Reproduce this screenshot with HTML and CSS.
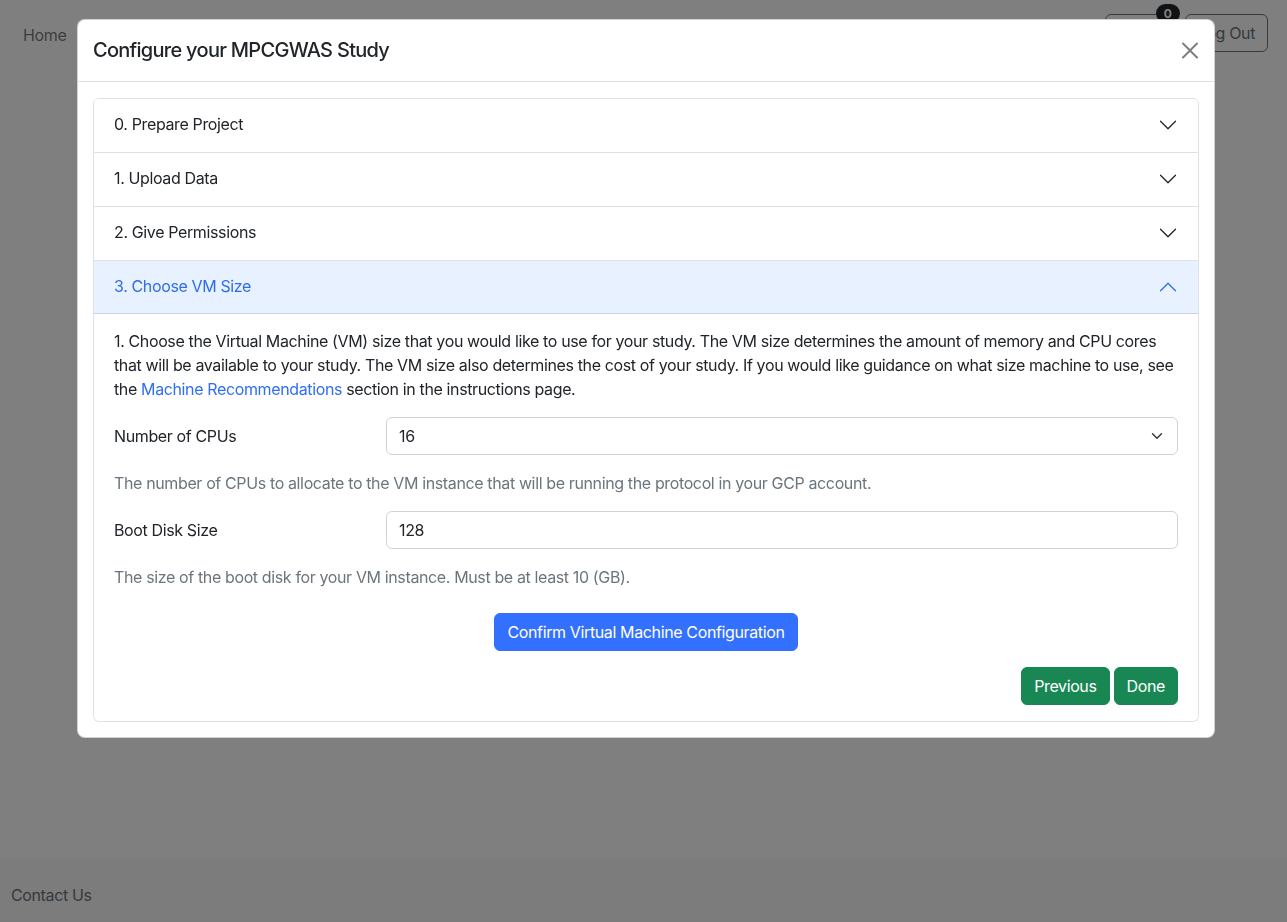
FILE: index.html
```html
<!DOCTYPE html>
<html lang="en">
<head>
<meta charset="utf-8">
<title>Configure your MPCGWAS Study</title>
<link rel="stylesheet" href="styles.css">
</head>
<body>
<div class="page">
  <nav class="navbar">
    <a class="nav-link" href="#">Home</a>
    <div class="nav-actions">
      <button class="btn btn-outline btn-notify">Inbox<span class="badge">0</span></button>
      <button class="btn btn-outline">Log Out</button>
    </div>
  </nav>
  <main class="main"></main>
  <footer class="footer">
    <a class="footer-link" href="#">Contact Us</a>
  </footer>
</div>

<div class="backdrop"></div>

<div class="modal">
  <div class="modal-dialog">
    <div class="modal-content">
      <div class="modal-header">
        <h5 class="modal-title">Configure your MPCGWAS Study</h5>
        <button class="btn-close" aria-label="Close">
          <svg viewBox="0 0 16 16" width="16" height="16"><path d="M.293.293a1 1 0 0 1 1.414 0L8 6.586 14.293.293a1 1 0 1 1 1.414 1.414L9.414 8l6.293 6.293a1 1 0 0 1-1.414 1.414L8 9.414l-6.293 6.293a1 1 0 0 1-1.414-1.414L6.586 8 .293 1.707a1 1 0 0 1 0-1.414z"/></svg>
        </button>
      </div>
      <div class="modal-body">
        <div class="accordion">
          <div class="accordion-item">
            <button class="accordion-button">
              <span>0. Prepare Project</span>
              <svg class="chev" viewBox="0 0 16 16"><path fill-rule="evenodd" d="M1.646 4.646a.5.5 0 0 1 .708 0L8 10.293l5.646-5.647a.5.5 0 0 1 .708.708l-6 6a.5.5 0 0 1-.708 0l-6-6a.5.5 0 0 1 0-.708z"/></svg>
            </button>
          </div>
          <div class="accordion-item">
            <button class="accordion-button">
              <span>1. Upload Data</span>
              <svg class="chev" viewBox="0 0 16 16"><path fill-rule="evenodd" d="M1.646 4.646a.5.5 0 0 1 .708 0L8 10.293l5.646-5.647a.5.5 0 0 1 .708.708l-6 6a.5.5 0 0 1-.708 0l-6-6a.5.5 0 0 1 0-.708z"/></svg>
            </button>
          </div>
          <div class="accordion-item">
            <button class="accordion-button">
              <span>2. Give Permissions</span>
              <svg class="chev" viewBox="0 0 16 16"><path fill-rule="evenodd" d="M1.646 4.646a.5.5 0 0 1 .708 0L8 10.293l5.646-5.647a.5.5 0 0 1 .708.708l-6 6a.5.5 0 0 1-.708 0l-6-6a.5.5 0 0 1 0-.708z"/></svg>
            </button>
          </div>
          <div class="accordion-item">
            <button class="accordion-button open">
              <span>3. Choose VM Size</span>
              <svg class="chev" viewBox="0 0 16 16"><path fill-rule="evenodd" d="M1.646 4.646a.5.5 0 0 1 .708 0L8 10.293l5.646-5.647a.5.5 0 0 1 .708.708l-6 6a.5.5 0 0 1-.708 0l-6-6a.5.5 0 0 1 0-.708z"/></svg>
            </button>
            <div class="accordion-body">
              <p class="intro">1. Choose the Virtual Machine (VM) size that you would like to use for your study. The VM size determines the amount of memory and CPU cores that will be available to your study. The VM size also determines the cost of your study. If you would like guidance on what size machine to use, see the <a href="#">Machine Recommendations</a> section in the instructions page.</p>
              <div class="form-row">
                <label class="form-label" for="cpus">Number of CPUs</label>
                <div class="form-field">
                  <select id="cpus" class="form-select">
                    <option>16</option>
                  </select>
                </div>
              </div>
              <p class="form-text">The number of CPUs to allocate to the VM instance that will be running the protocol in your GCP account.</p>
              <div class="form-row">
                <label class="form-label" for="disk">Boot Disk Size</label>
                <div class="form-field">
                  <input id="disk" class="form-control" type="text" value="128">
                </div>
              </div>
              <p class="form-text">The size of the boot disk for your VM instance. Must be at least 10 (GB).</p>
              <div class="confirm-wrap">
                <button class="btn btn-primary">Confirm Virtual Machine Configuration</button>
              </div>
              <div class="step-actions">
                <button class="btn btn-success">Previous</button>
                <button class="btn btn-success">Done</button>
              </div>
            </div>
          </div>
        </div>
      </div>
    </div>
  </div>
</div>
</body>
</html>
```

FILE: styles.css
```css
* { box-sizing: border-box; }

html, body {
  margin: 0;
  height: 100%;
}

body {
  font-family: "Inter", "Helvetica Neue", Arial, sans-serif;
  font-size: 16px;
  line-height: 1.5;
  letter-spacing: -0.37px;
  color: #212529;
  background: #fff;
}

.page {
  min-height: 100vh;
  display: flex;
  flex-direction: column;
}

.navbar {
  display: flex;
  justify-content: space-between;
  align-items: flex-start;
  padding: 14px 19px 0 23px;
}

.nav-link {
  color: rgba(0, 0, 0, 0.55);
  text-decoration: none;
  margin-top: 9px;
}

.nav-actions {
  display: flex;
  gap: 17px;
}

.btn {
  font-family: inherit;
  font-size: 16px;
  line-height: 24px;
  letter-spacing: -0.37px;
  padding: 6px 12px;
  border: 1px solid transparent;
  border-radius: 6px;
  cursor: pointer;
  position: relative;
}

.btn-outline {
  background: transparent;
  border-color: #6c757d;
  color: #6c757d;
  height: 38px;
}

.btn-notify {
  width: 63px;
}

.badge {
  position: absolute;
  top: -11px;
  right: -13px;
  min-width: 24px;
  height: 19px;
  padding: 0 6px;
  border-radius: 10px;
  background: #212529;
  color: #fff;
  font-size: 12px;
  font-weight: 700;
  line-height: 19px;
  letter-spacing: 0;
  text-align: center;
}

.main {
  flex: 1;
}

.footer {
  height: 64px;
  background: #f8f9fa;
  display: flex;
  align-items: center;
  padding: 9px 11px 0;
}

.footer-link {
  color: #6c757d;
  text-decoration: none;
}

.backdrop {
  position: fixed;
  inset: 0;
  background: rgba(0, 0, 0, 0.5);
}

.modal {
  position: fixed;
  inset: 0;
  display: flex;
  justify-content: flex-start;
  padding: 19px 0 0 77px;
}

.modal-dialog {
  width: 1138px;
}

.modal-content {
  background: #fff;
  border: 1px solid rgba(0, 0, 0, 0.175);
  border-radius: 8px;
}

.modal-header {
  display: flex;
  align-items: center;
  justify-content: space-between;
  padding: 16px 16px 16px 15px;
  border-bottom: 1px solid #dee2e6;
}

.modal-title {
  margin: 0;
  font-size: 20px;
  font-weight: 500;
  line-height: 29px;
  letter-spacing: -0.72px;
}

.btn-close {
  width: 24px;
  height: 24px;
  padding: 4px;
  border: 0;
  background: transparent;
  opacity: 0.5;
  display: flex;
  align-items: center;
  justify-content: center;
  margin-right: -4px;
}

.btn-close svg {
  width: 17px;
  height: 17px;
  fill: #000;
}

.modal-body {
  padding: 16px 15px 15px 15px;
}

.accordion-item {
  border: 1px solid #dee2e6;
  background: #fff;
}

.accordion-item:first-child {
  border-top-left-radius: 6px;
  border-top-right-radius: 6px;
}

.accordion-item:last-child {
  border-bottom-left-radius: 6px;
  border-bottom-right-radius: 6px;
}

.accordion-item + .accordion-item {
  border-top: 0;
}

.accordion-button {
  width: 100%;
  display: flex;
  align-items: center;
  justify-content: space-between;
  padding: 15px 20px 17px;
  font-family: inherit;
  font-size: 16px;
  line-height: 21px;
  letter-spacing: -0.37px;
  color: #212529;
  background: #fff;
  border: 0;
  text-align: left;
  cursor: pointer;
}

.accordion-item:first-child .accordion-button {
  border-top-left-radius: 5px;
  border-top-right-radius: 5px;
}

.accordion-button .chev {
  width: 20px;
  height: 20px;
  fill: #212529;
  flex-shrink: 0;
}

.accordion-button.open {
  background: #e7f1ff;
  color: #2f6ee6;
  box-shadow: inset 0 -1px 0 rgba(0, 0, 0, 0.125);
}

.accordion-button.open .chev {
  fill: #2f6ee6;
  transform: rotate(180deg);
}

.accordion-body {
  padding: 15px 20px 16px;
}

.intro {
  margin: 0 0 16px;
}

.intro a {
  color: #2f6ef5;
  text-decoration: none;
}

.form-row {
  display: grid;
  grid-template-columns: 272px 1fr;
  align-items: center;
}

.form-label {
  display: block;
}

.form-select,
.form-control {
  display: block;
  width: 100%;
  height: 38px;
  padding: 6px 12px;
  font-family: inherit;
  font-size: 16px;
  line-height: 24px;
  letter-spacing: -0.37px;
  color: #212529;
  background-color: #fff;
  border: 1px solid #ced4da;
  border-radius: 6px;
  outline: none;
}

.form-select {
  appearance: none;
  -webkit-appearance: none;
  padding-right: 36px;
  background-image: url("data:image/svg+xml,%3csvg xmlns='http://www.w3.org/2000/svg' viewBox='0 0 16 16'%3e%3cpath fill='none' stroke='%23343a40' stroke-linecap='round' stroke-linejoin='round' stroke-width='2' d='m2 5 6 6 6-6'/%3e%3c/svg%3e");
  background-repeat: no-repeat;
  background-position: right 12px center;
  background-size: 16px 12px;
}

.form-text {
  margin: 16px 0 16px;
  color: #6c757d;
}

.confirm-wrap {
  display: flex;
  justify-content: center;
  margin-top: 24px;
}

.btn-primary {
  background: #3370fd;
  border-color: #3370fd;
  color: #fff;
}

.step-actions {
  display: flex;
  justify-content: flex-end;
  gap: 4px;
  margin-top: 16px;
}

.btn-success {
  background: #198754;
  border-color: #198754;
  color: #fff;
}
```
